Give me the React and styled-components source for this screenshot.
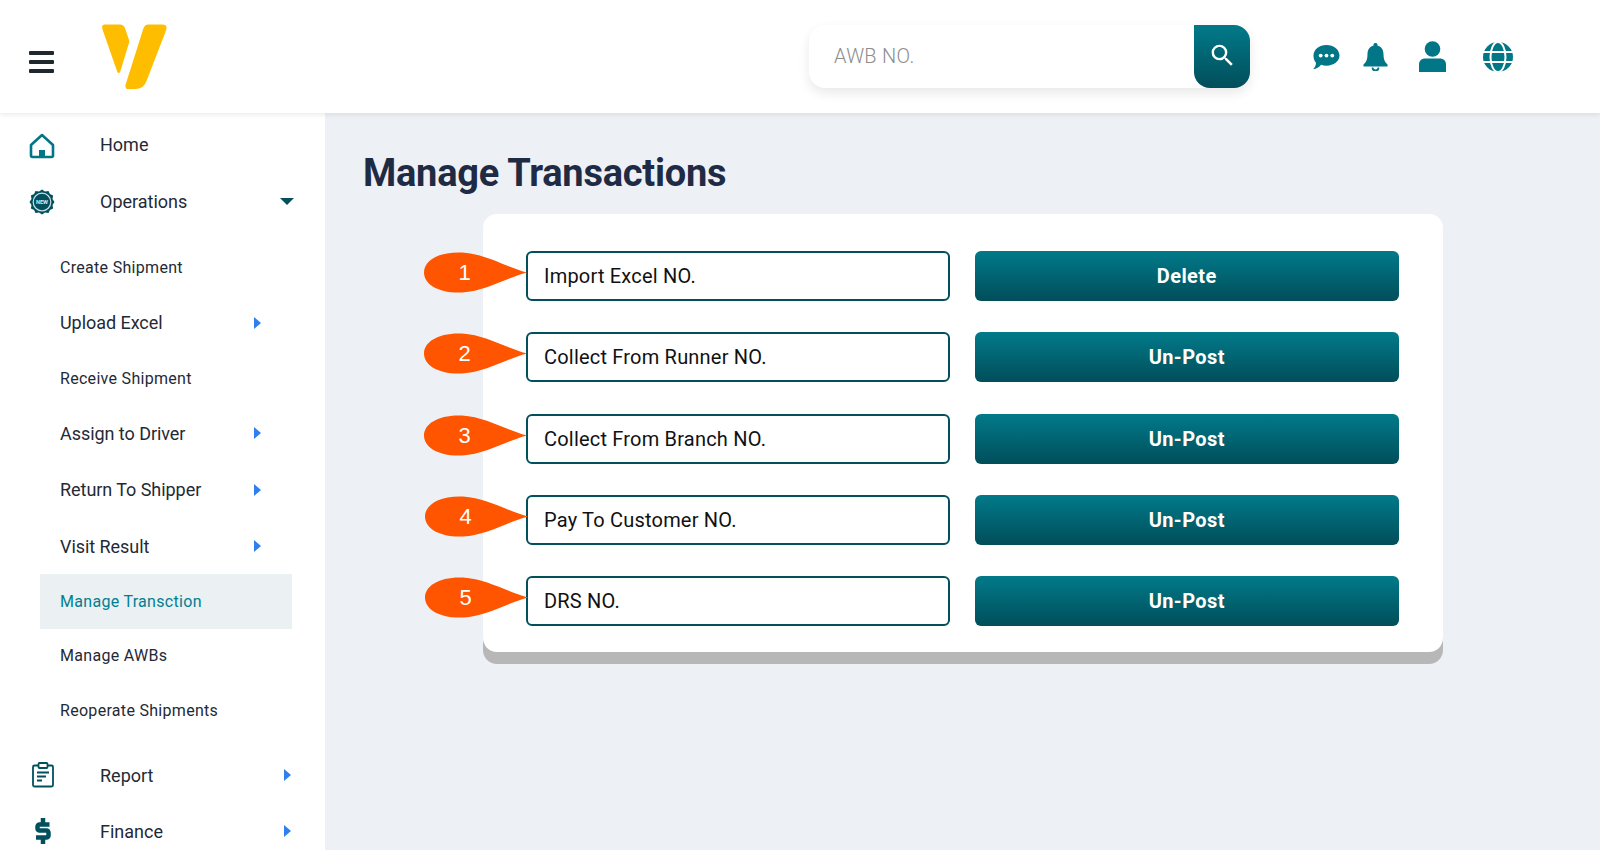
import React from 'react';
import styled, { createGlobalStyle } from 'styled-components';
import { MdSearch } from 'react-icons/md';

const GlobalStyle = createGlobalStyle`
	* {
		box-sizing: border-box;
	}
	html, body {
		margin: 0;
		height: 100%;
		overflow: hidden;
		font-family: Roboto, "Liberation Sans", sans-serif;
		background: #edf1f5;
	}
`;

const Page = styled.div`
	height: 850px;
	display: flex;
	flex-direction: column;
	overflow: hidden;
`;

const Header = styled.header`
	position: relative;
	z-index: 2;
	flex: 0 0 113px;
	display: flex;
	align-items: flex-start;
	background: #fff;
	box-shadow: 0 2px 5px rgba(0, 0, 0, 0.08);
`;

const Burger = styled.div`
	width: 25px;
	margin: 51px 0 0 29px;
	display: flex;
	flex-direction: column;
	gap: 5px;
	span {
		display: block;
		height: 4px;
		border-radius: 1px;
		background: #1f282d;
	}
`;

const Logo = styled.svg`
	width: 65px;
	height: 66px;
	margin: 24px 0 0 48px;
`;

const Search = styled.div`
	width: 441px;
	height: 63px;
	margin: 25px 0 0 642px;
	display: flex;
	border-radius: 16px;
	background: #fff;
	box-shadow: 0 5px 12px rgba(0, 0, 0, 0.09);
`;

const SearchInput = styled.input`
	flex: 1;
	min-width: 0;
	padding: 0 0 2px 25px;
	border: 0;
	outline: 0;
	background: transparent;
	font-family: Roboto, sans-serif;
	font-size: 20px;
	font-weight: 300;
	letter-spacing: 0.3px;
	&::placeholder {
		color: #8d8d8d;
		opacity: 1;
	}
`;

const SearchButton = styled.button`
	width: 56px;
	padding: 0 0 2px;
	border: 0;
	display: flex;
	align-items: center;
	justify-content: center;
	color: #fff;
	border-radius: 0 16px 16px 16px;
	background: linear-gradient(#017a8a, #014e5a);
`;

const TopIcons = styled.div`
	display: flex;
	align-items: center;
	margin: 41px 0 0 62px;
	color: #017686;
`;

const TopIcon = styled.svg`
	display: block;
	margin-right: ${props => props.$gap}px;
`;

const Body = styled.div`
	flex: 1;
	min-height: 0;
	display: flex;
`;

const Sidebar = styled.nav`
	flex: 0 0 325px;
	background: #fff;
	padding-top: 3px;
	overflow: hidden;
`;

const MainItem = styled.div`
	height: ${props => props.$height || 56}px;
	display: flex;
	align-items: center;
	padding-left: 29px;
	font-size: 18px;
	color: #1f2a37;
`;

const ItemIcon = styled.span`
	flex: 0 0 71px;
	display: flex;
	align-items: center;
	padding-top: ${props => props.$drop || 0}px;
	color: #01505c;
`;

const ItemLabel = styled.span`
	flex: 0 0 181px;
`;

const SubList = styled.div`
	padding: 10px 0 9.8px 40px;
`;

const SubItem = styled.div`
	width: 252px;
	height: ${props => (props.$parent ? 56.3 : 54.5)}px;
	display: flex;
	align-items: center;
	padding-left: 20px;
	font-size: ${props => (props.$parent ? 18 : 16)}px;
	color: ${props => (props.$active ? '#017f92' : '#1f2a37')};
	background: ${props => (props.$active ? '#ebf0f2' : 'transparent')};
`;

const SubLabel = styled.span`
	flex: 0 0 194px;
	letter-spacing: ${props => (props.$parent ? '-0.05px' : '0.3px')};
`;

const ArrowRight = styled.span`
	width: 0;
	height: 0;
	margin-left: ${props => props.$inset || 0}px;
	border-top: 6.5px solid transparent;
	border-bottom: 6.5px solid transparent;
	border-left: 7px solid #2f80ed;
`;

const ArrowDown = styled.span`
	width: 0;
	height: 0;
	margin-left: -1px;
	border-left: 7px solid transparent;
	border-right: 7px solid transparent;
	border-top: 7px solid #01505c;
`;

const Main = styled.main`
	flex: 1;
	padding: 37px 0 0 38px;
`;

const Title = styled.h1`
	margin: 0 0 18px;
	font-size: 38px;
	line-height: 46px;
	font-weight: 700;
	color: #1f2a44;
	letter-spacing: -0.25px;
`;

const Card = styled.section`
	width: 960px;
	margin-left: 120px;
	padding: 37px 44px 26px 43px;
	display: flex;
	flex-direction: column;
	gap: 31.25px;
	background: #fff;
	border-radius: 14px;
	box-shadow: 0 12px 0 #b7b7b7;
`;

const Row = styled.div`
	position: relative;
	display: flex;
	gap: 25px;
`;

const Marker = styled.div`
	position: absolute;
	left: ${props => (props.$shift ? -101 : -102)}px;
	top: 1px;
	width: 103px;
	height: 41px;
	color: #fff;
`;

const MarkerShape = styled.svg`
	display: block;
`;

const MarkerNumber = styled.span`
	position: absolute;
	left: 34px;
	top: 6px;
	width: 13px;
	text-align: center;
	font-family: "Liberation Sans", Arial, sans-serif;
	font-size: 22px;
	line-height: 30px;
`;

const NumberField = styled.input`
	width: 424px;
	height: 50px;
	padding: 0 16px;
	border: 2px solid #01505c;
	border-radius: 6px;
	outline: 0;
	font-family: Roboto, sans-serif;
	font-size: 20px;
	letter-spacing: 0.2px;
	&::placeholder {
		color: #111;
		opacity: 1;
	}
`;

const ActionButton = styled.button`
	width: 425px;
	height: 50px;
	border: 0;
	border-radius: 6px;
	color: #fff;
	font-family: Roboto, sans-serif;
	font-size: 20px;
	font-weight: 700;
	letter-spacing: 0.4px;
	background: linear-gradient(#017a8a, #014e5a);
`;

const HomeIcon = () => (
	<svg width="26" height="26" viewBox="0 0 26 26">
		<path d="M13 2 L24 12 V22.5 a1.5 1.5 0 0 1 -1.5 1.5 H3.5 A1.5 1.5 0 0 1 2 22.5 V12 Z" fill="none" stroke="#017686" strokeWidth="2.6" strokeLinejoin="round" />
		<rect x="10" y="17" width="6" height="7" fill="#017686" />
	</svg>
);

const NewIcon = () => (
	<svg width="26" height="26" viewBox="0 0 26 26">
		<path d="M13 0.5 l3 2 3.5-.6 1.4 3.2 3.2 1.4 -.6 3.5 2 3 -2 3 .6 3.5 -3.2 1.4 -1.4 3.2 -3.5-.6 -3 2 -3-2 -3.5.6 -1.4-3.2 -3.2-1.4 .6-3.5 -2-3 2-3 -.6-3.5 3.2-1.4 1.4-3.2 3.5.6 Z" fill="#01505c" />
		<circle cx="13" cy="13" r="8.8" fill="#01505c" stroke="#cfe0e3" strokeWidth="1.2" />
		<text x="13" y="15" textAnchor="middle" fontFamily="Roboto, sans-serif" fontSize="5.6" fontWeight="700" fill="#dfeaec">NEW</text>
	</svg>
);

const ReportIcon = () => (
	<svg width="22" height="26" viewBox="0 0 22 26" style={{ marginLeft: 3 }}>
		<path d="M6 3.5 H2.5 A1.5 1.5 0 0 0 1 5 V23 A1.5 1.5 0 0 0 2.5 24.5 H19.5 A1.5 1.5 0 0 0 21 23 V5 A1.5 1.5 0 0 0 19.5 3.5 H16" fill="none" stroke="#01505c" strokeWidth="1.8" />
		<rect x="6.5" y="1" width="9" height="5" rx="1" fill="none" stroke="#01505c" strokeWidth="1.8" />
		<path d="M5 10.5 H17 M5 14.5 H14 M5 18.5 H10" stroke="#01505c" strokeWidth="2" />
	</svg>
);

const DollarIcon = () => (
	<svg width="16" height="26" viewBox="0 0 16 26" style={{ marginLeft: 6 }}>
		<path d="M14.5 6.5 H4.5 a2 2 0 0 0 -2 2 V10.500 a2 2 0 0 0 2 2 H11.500 a2 2 0 0 1 2 2 V17.500 a2 2 0 0 1 -2 2 H1" fill="none" stroke="#01505c" strokeWidth="4.5" />
		<path d="M8 0 V5 M8 21 V26" stroke="#01505c" strokeWidth="4.5" />
	</svg>
);

const ChatIcon = () => (
	<TopIcon $gap={23} width="28" height="26" viewBox="0 0 28 27">
		<path d="M14.5 1 C22 1 28 5.800 28 12 C28 18.200 22 22.500 14.500 22.500 C12.500 22.500 10.500 22.200 8.800 21.600 C7 24 4 26 0.500 26 C2.500 24.500 3.600 22.300 3.600 19.500 C1.800 17.500 1 15 1 12 C1 5.800 7 1 14.500 1 Z" fill="currentColor" />
		<circle cx="8.500" cy="12" r="2" fill="#fff" />
		<circle cx="14.500" cy="12" r="2" fill="#fff" />
		<circle cx="20.500" cy="12" r="2" fill="#fff" />
	</TopIcon>
);

const BellIcon = () => (
	<TopIcon $gap={31} width="25" height="28" viewBox="0 0 24 28">
		<path d="M12 0 a1.800 1.800 0 0 1 1.800 2.600 C18 3.600 20 7 20 11.500 C20 16 21 19 24 21.500 V23.500 H0 V21.500 C3 19 4 16 4 11.500 C4 7 6 3.600 10.200 2.600 A1.800 1.800 0 0 1 12 0 Z" fill="currentColor" />
		<path d="M9 24.500 a3 3 0 0 0 6 0" fill="none" stroke="currentColor" strokeWidth="1.800" />
	</TopIcon>
);

const UserIcon = () => (
	<TopIcon $gap={37} width="27" height="31" viewBox="0 0 27 31">
		<circle cx="13.500" cy="8" r="7.800" fill="currentColor" />
		<path d="M0 31 V23.500 C0 19.500 3 17.500 6 17.500 H21 C24 17.500 27 19.500 27 23.500 V31 Z" fill="currentColor" />
	</TopIcon>
);

const GlobeIcon = () => (
	<TopIcon $gap={0} width="30" height="30" viewBox="0 0 30 30">
		<circle cx="15" cy="15" r="15" fill="currentColor" />
		<ellipse cx="15" cy="15" rx="7.500" ry="15" fill="none" stroke="#fff" strokeWidth="2" />
		<path d="M0 10 H30 M0 20 H30" stroke="#fff" strokeWidth="2" />
	</TopIcon>
);

const subMenu = [
	{ name: 'Create Shipment' },
	{ name: 'Upload Excel', parent: true },
	{ name: 'Receive Shipment' },
	{ name: 'Assign to Driver', parent: true },
	{ name: 'Return To Shipper', parent: true },
	{ name: 'Visit Result', parent: true },
	{ name: 'Manage Transction', active: true },
	{ name: 'Manage AWBs' },
	{ name: 'Reoperate Shipments' },
];

const transactions = [
	{ label: 'Import Excel NO.', action: 'Delete' },
	{ label: 'Collect From Runner NO.', action: 'Un-Post' },
	{ label: 'Collect From Branch NO.', action: 'Un-Post' },
	{ label: 'Pay To Customer NO.', action: 'Un-Post', shift: true },
	{ label: 'DRS NO.', action: 'Un-Post', shift: true },
];

const App = () => {
	return (
		<Page>
			<GlobalStyle />
			<Header>
				<Burger><span /><span /><span /></Burger>
				<Logo viewBox="0 0 66 66">
					<path d="M3 0 H18 Q22 0 23.500 4 L27.500 16 Q28 18 27 20 L18.500 48 Q17 50.500 15.500 48 L0.500 5 Q-1 0 3 0 Z" fill="#ffbd00" />
					<path d="M47 0 H61 Q67 0 65 6 L45 58 Q42 65.500 34 65.500 H27 Q23 65.500 24 61 L42 4 Q43.500 0 47 0 Z" fill="#ffbd00" />
				</Logo>
				<Search>
					<SearchInput placeholder="AWB NO." />
					<SearchButton><MdSearch size={29} /></SearchButton>
				</Search>
				<TopIcons>
					<ChatIcon />
					<BellIcon />
					<UserIcon />
					<GlobeIcon />
				</TopIcons>
			</Header>
			<Body>
				<Sidebar>
					<MainItem>
						<ItemIcon $drop={3}><HomeIcon /></ItemIcon>
						<ItemLabel>Home</ItemLabel>
					</MainItem>
					<MainItem $height={58}>
						<ItemIcon $drop={1}><NewIcon /></ItemIcon>
						<ItemLabel>Operations</ItemLabel>
						<ArrowDown />
					</MainItem>
					<SubList>
						{subMenu.map(item => (
							<SubItem key={item.name} $parent={item.parent} $active={item.active}>
								<SubLabel $parent={item.parent}>{item.name}</SubLabel>
								{item.parent && <ArrowRight />}
							</SubItem>
						))}
					</SubList>
					<MainItem>
						<ItemIcon><ReportIcon /></ItemIcon>
						<ItemLabel>Report</ItemLabel>
						<ArrowRight $inset={3} />
					</MainItem>
					<MainItem>
						<ItemIcon><DollarIcon /></ItemIcon>
						<ItemLabel>Finance</ItemLabel>
						<ArrowRight $inset={3} />
					</MainItem>
				</Sidebar>
				<Main>
					<Title>Manage Transactions</Title>
					<Card>
						{transactions.map((row, index) => (
							<Row key={row.label}>
								<Marker $shift={row.shift}>
									<MarkerShape width="103" height="41" viewBox="0 0 103 41">
										<path d="M103 20.500 C82 15 62 2 38 0.500 C14 -0.500 0 9 0 20.500 C0 32 14 41.500 38 40.500 C62 39 82 26 103 20.500 Z" fill="#ff5500" />
									</MarkerShape>
									<MarkerNumber>{index + 1}</MarkerNumber>
								</Marker>
								<NumberField placeholder={row.label} />
								<ActionButton>{row.action}</ActionButton>
							</Row>
						))}
					</Card>
				</Main>
			</Body>
		</Page>
	);
};

export default App;
